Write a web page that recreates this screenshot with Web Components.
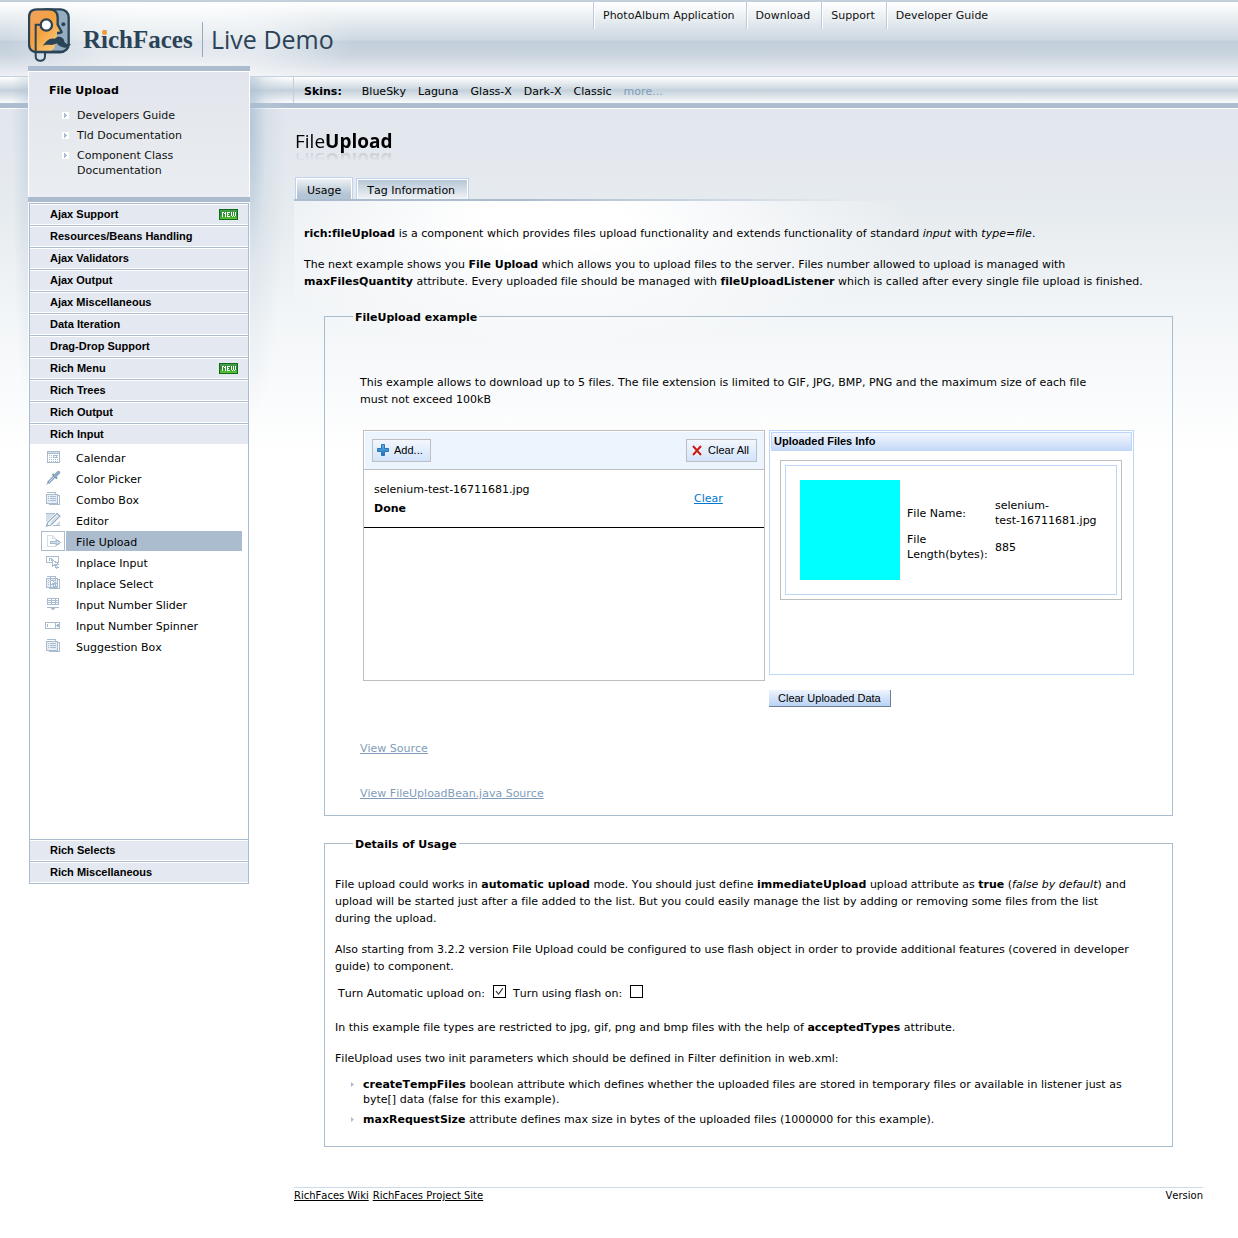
<!DOCTYPE html>
<html lang="en">
<head>
<meta charset="utf-8">
<title>RichFaces Live Demo - File Upload</title>
<style>
  html { background: #fff; }
  body { margin: 0; font: 11px/17px "DejaVu Sans", sans-serif; font-kerning: none; font-variant-ligatures: none; color: #000; }
</style>
</head>
<body>
<rf-app></rf-app>

<script>
const define = (name, html, setup) => {
  const template = document.createElement('template');
  template.innerHTML = html;
  customElements.define(name, class extends HTMLElement {
    connectedCallback() {
      if (this.shadowRoot) return;
      const root = this.attachShadow({ mode: 'open' });
      root.append(template.content.cloneNode(true));
      if (setup) setup(this, root);
    }
  });
};

/* Sidebar icons, drawn on a 16 by 16 grid */
const A = '#a9bccf', B = '#d3dee9';
const list = `<path fill="#e6edf4" d="M2 4h11v9H2z"/><path fill="none" stroke="${A}" d="M1.5 3.5h11v9h-11zM1.5 1.5h9v2M12.5 4.5h2v9h-11M5 5.500h6M5 7.500h6M5 9.500h6M3 5.500h1M3 7.500h1M3 9.500h1"/>`;
const cursor = `<path fill="#fff" stroke="${A}" d="M7.500 5.500v7l2-2 2 4 1.500-1-2-3h2.500z"/>`;
const ICONS = {
  calendar: `<path fill="none" stroke="${A}" d="M2.500 2.500h12v11h-12z"/><path stroke="${B}" d="M3 3.500h11"/><path stroke="${A}" d="M3 4.500h11"/><path stroke="${A}" stroke-dasharray="1 1" d="M4 6.500h10M4 8.500h10M4 10.500h10M4 12.500h10"/><path fill="#fff" stroke="${A}" d="M8.500 6.500h3v2h-3z"/>`,
  picker: `<g shape-rendering="auto"><path stroke="#7f9fbc" stroke-width="3" d="M3 13l7-7"/><path stroke="#dbe6f0" d="M4 12l6-6"/><path stroke="#6f93b5" stroke-width="2" d="M7.500 4l4.500 4.500"/><path stroke="#8faac3" stroke-width="3.500" stroke-linecap="round" d="M10.500 5.500l3-3"/><path stroke="#7f9fbc" d="M1.500 14.500l2-2"/></g>`,
  combo: list,
  editor: `<path fill="${B}" d="M1 2h9L1 10zM9 14l6-6v6z"/><path stroke="${A}" d="M1 1.500h9M8 13.500h7"/><g shape-rendering="auto"><path fill="#fff" stroke="#8faac3" stroke-width="1.200" d="M1.500 14l1.500-4 9-8.500L15 4 6 13z"/><path stroke="${A}" d="M5 11.500l8-8"/></g>`,
  upload: `<path fill="#fff" stroke="${B}" d="M2.500 2.500h5l3 3v8h-8z"/><path fill="none" stroke="${B}" d="M7.500 2.500v3h3"/><path fill="${B}" stroke="${A}" d="M5.500 8.500h6v-2l4 3-4 3v-2h-6z"/>`,
  inplace: `<path fill="#fff" stroke="${A}" d="M1.500 2.500h12v6h-12z"/><path fill="none" stroke="${A}" d="M4 6.500v-2h2.500v2"/>${cursor}`,
  select: `${list}<path stroke="${A}" d="M10.500 2v3M5.500 2v11"/><path fill="#fff" stroke="${A}" d="M5.500 4.500v6l2-2 2 4 1.500-1-2-3h2.500z"/>`,
  slider: `<path fill="#fff" stroke="${A}" d="M2.500 2.500h11v6h-11z"/><path stroke="${A}" d="M2 4.500h12M2 6.500h12M6.500 3v6M10.500 3v6M2 11.500h12"/><path fill="${A}" d="M5 11h6v1h-1v1H9v1H7v-1H6v-1H5z"/>`,
  spinner: `<path fill="#fff" stroke="${A}" d="M.500 5.500h14v6H.500zM10.500 5v7"/><path stroke="${A}" d="M2.500 7v3M11 8.500h4"/><path fill="${A}" d="M12 7h2v1h-2zM12 9h2v1h-2z"/>`,
  suggest: list
};

define('rf-icon', `
  <style>:host{display:block;width:16px;height:16px}svg{display:block}</style>
  <svg width="16" height="16" viewBox="0 0 16 16" fill="none" shape-rendering="crispEdges" aria-hidden="true"></svg>`,
  (el, root) => { root.querySelector('svg').innerHTML = ICONS[el.getAttribute('name')] || ''; });

define('rf-new-badge', `
  <style>:host{display:block;width:19px;height:11px}svg{display:block}</style>
  <svg width="19" height="11" viewBox="0 0 19 11" shape-rendering="crispEdges" role="img" aria-label="New">
    <defs><linearGradient id="g" x2="0" y2="1"><stop stop-color="#4aa04f"/><stop offset=".45" stop-color="#1f8a25"/><stop offset="1" stop-color="#5cc832"/></linearGradient></defs>
    <path fill="#0f6a1c" d="M0 0h19v11H0z"/><path fill="url(#g)" d="M1 1h17v9H1z"/>
    <path fill="#fff" d="M3 3h1v5H3zM4 3h1v1H4zM5 4h1v1H5zM6 3h1v5H6zM8 3h1v5H8zM9 3h2v1H9zM9 5h1v1H9zM9 7h2v1H9zM12 3h1v4h-1zM14 3h1v4h-1zM16 3h1v4h-1zM13 7h1v1h-1zM15 7h1v1h-1z"/>
  </svg>`);

define('rf-logo', `
  <style>
    :host{display:flex;color:#2b4356}
    .mark{display:block;flex:none;margin:8px 11px 0 0}
    .brand{position:relative;font:bold 25px/30px "Liberation Serif",serif;margin-top:25px;width:111px;white-space:nowrap}
    .dot{position:absolute;left:19px;top:5px;width:5px;height:5px;border-radius:50%;background:#f6a03c}
    .demo{border-left:1px solid #94a9bb;margin:22px 0 0 8px;padding:0 0 0 8px;height:35px;font:25px/34px "Open Sans",sans-serif;white-space:nowrap}
  </style>
  <svg class="mark" width="44" height="54" viewBox="0 0 132 162" aria-hidden="true">
    <defs>
      <linearGradient id="o" x2="1" y2="1"><stop stop-color="#eda163"/><stop offset=".45" stop-color="#f5a23e"/><stop offset="1" stop-color="#fbd68e"/></linearGradient>
    </defs>
    <rect x="28" y="4" width="94" height="128" rx="24" fill="#94aebf" stroke="#2b4356" stroke-width="7"/>
    <path d="M26 4h38c18 0 25 12 25 24v22l12 22c-5 4-9 3-14 3-1 30-6 57-30 57H26C12 132 3 124 3 108V28C3 12 12 4 26 4z" fill="url(#o)"/>
    <path d="M26 132C12 132 3 124 3 108V28C3 12 12 4 26 4h38c18 0 25 12 25 24v22l12 22c-5 4-9 3-14 3M26 132h72" fill="none" stroke="#2b4356" stroke-width="7" stroke-linejoin="round"/>
    <path d="M43 114c9-9 16-26 38-22 8-11 27-6 28 9 6 8 13 9 20 7-7 15-29 15-43-2-14 10-27 0-43 8z" fill="#2b4356"/>
    <path d="M38 50H23v95c0 18 28 18 28 0v-12" fill="none" stroke="#2b4356" stroke-width="6"/>
    <circle cx="55" cy="51" r="17" fill="#fff" stroke="#2b4356" stroke-width="7"/>
    <circle cx="106" cy="49" r="6" fill="#2b4356"/>
  </svg>
  <span class="brand">RichFaces<span class="dot"></span></span>
  <span class="demo">Live Demo</span>`);

define('rf-top-nav', `
  <style>
    :host{display:flex;padding-top:2px}
    a{color:#111;text-decoration:none;padding:5px 11px 5px 9px;border-left:1px solid #bccbd9;box-shadow:inset 1px 0 #fff;height:17px}
  </style>
  <a href="#album">PhotoAlbum Application</a><a href="#download">Download</a><a href="#support">Support</a><a href="#guide">Developer Guide</a>`);

define('rf-skins', `
  <style>
    :host{display:flex;gap:12px;height:26px;line-height:29px;padding-left:10px;margin-left:-1px;border-left:1px solid #c3cfdb}
    b{margin-right:8px}
    a{color:#000;text-decoration:none}
    .more{color:#7f9dba}
  </style>
  <b>Skins:</b><a href="#bluesky">BlueSky</a><a href="#laguna">Laguna</a><a href="#glassx">Glass-X</a><a href="#darkx">Dark-X</a><a href="#classic">Classic</a><a class="more" href="#more">more...</a>`);

define('rf-info-panel', `
  <style>
    :host{display:block;border:solid #abbccf;border-width:5px 0;box-sizing:border-box;height:136px}
    section{box-sizing:border-box;height:100%;padding:10px 12px 0 20px;border:1px solid #fff;border-bottom:0;background:linear-gradient(#e2e5ed,#e6eaee 50%,#eaeef2)}
    h2{font:bold 11px/17px "DejaVu Sans",sans-serif;margin:0}
    ul{list-style:none;margin:9px 0 0 13px;padding:0;line-height:15px}
    li{display:flex;gap:8px;margin-bottom:5px}
    svg{flex:none;margin-top:4px}
    a{color:#111;text-decoration:none}
  </style>
  <section>
    <h2>File Upload</h2>
    <ul></ul>
  </section>`,
  (el, root) => {
    root.querySelector('ul').innerHTML = ['Developers Guide', 'Tld Documentation', 'Component Class Documentation'].map(t =>
      `<li><svg width="7" height="7" aria-hidden="true" shape-rendering="crispEdges"><path fill="#fff" d="M0 0h7v7H0z"/><path fill="#a9bccf" d="M2 1h1v1h1v1h1v1H4v1H3v1H2z"/></svg><a href="#doc">${t}</a></li>`).join('');
  });

define('rf-menu-group', `
  <style>
    :host{display:block;border-top:1px solid #abbccf;background:#fff}
    button{display:flex;align-items:center;justify-content:space-between;width:100%;height:21px;padding:0 10px 0 20px;border:solid #fff;border-width:1px 0;background:#e4e8f0;font:bold 11px/17px "Liberation Sans",sans-serif;color:#000;text-align:left}
    :host([open]) button{height:20px;border-bottom:0}
    .items{display:none}
    :host([open]) .items{display:flex;flex-direction:column;gap:1px;height:392px;padding:3px 6px 0 11px}
  </style>
  <button type="button"><span></span></button>
  <div class="items"><slot></slot></div>`,
  (el, root) => {
    const button = root.querySelector('button');
    button.firstChild.textContent = el.getAttribute('label');
    button.setAttribute('aria-expanded', el.hasAttribute('open'));
    if (el.hasAttribute('new')) button.append(document.createElement('rf-new-badge'));
  });

define('rf-menu-item', `
  <style>
    :host{display:block}
    a{display:flex;gap:1px;color:#000;text-decoration:none;height:20px;line-height:18px}
    .icon{box-sizing:border-box;width:24px;padding:1px 3px;border:1px solid transparent}
    .label{flex:1;padding:3px 0 0 10px;box-sizing:border-box}
    :host([selected]) .icon{border-color:#abbccf;background:#fff}
    :host([selected]) .label{background:#abbccf}
  </style>
  <a href="#component"><span class="icon"><rf-icon></rf-icon></span><span class="label"><slot></slot></span></a>`,
  (el, root) => {
    const icon = document.createElement('rf-icon');
    icon.setAttribute('name', el.getAttribute('icon'));
    root.querySelector('.icon').replaceChildren(icon);
  });

define('rf-menu', `
  <style>
    :host{display:block;margin:1px 1px 0;border:solid #abbccf;border-width:0 1px 1px;box-shadow:0 0 0 1px rgba(255,255,255,.7)}
  </style>
  <nav>
    <rf-menu-group label="Ajax Support" new></rf-menu-group>
    <rf-menu-group label="Resources/Beans Handling"></rf-menu-group>
    <rf-menu-group label="Ajax Validators"></rf-menu-group>
    <rf-menu-group label="Ajax Output"></rf-menu-group>
    <rf-menu-group label="Ajax Miscellaneous"></rf-menu-group>
    <rf-menu-group label="Data Iteration"></rf-menu-group>
    <rf-menu-group label="Drag-Drop Support"></rf-menu-group>
    <rf-menu-group label="Rich Menu" new></rf-menu-group>
    <rf-menu-group label="Rich Trees"></rf-menu-group>
    <rf-menu-group label="Rich Output"></rf-menu-group>
    <rf-menu-group label="Rich Input" open>
      <rf-menu-item icon="calendar">Calendar</rf-menu-item>
      <rf-menu-item icon="picker">Color Picker</rf-menu-item>
      <rf-menu-item icon="combo">Combo Box</rf-menu-item>
      <rf-menu-item icon="editor">Editor</rf-menu-item>
      <rf-menu-item icon="upload" selected>File Upload</rf-menu-item>
      <rf-menu-item icon="inplace">Inplace Input</rf-menu-item>
      <rf-menu-item icon="select">Inplace Select</rf-menu-item>
      <rf-menu-item icon="slider">Input Number Slider</rf-menu-item>
      <rf-menu-item icon="spinner">Input Number Spinner</rf-menu-item>
      <rf-menu-item icon="suggest">Suggestion Box</rf-menu-item>
    </rf-menu-group>
    <rf-menu-group label="Rich Selects"></rf-menu-group>
    <rf-menu-group label="Rich Miscellaneous"></rf-menu-group>
  </nav>`);

define('rf-title', `
  <style>
    :host{display:block}
    h1{margin:0;width:fit-content;font:19px/20px "Open Sans",sans-serif;-webkit-box-reflect:below -1px linear-gradient(transparent 45%,rgba(0,0,0,.16))}
  </style>
  <h1>File<b>Upload</b></h1>`);

define('rf-tabs', `
  <style>
    :host{display:flex;align-items:flex-end;gap:3px;height:22px;padding-left:1px;border-bottom:2px solid;border-image:linear-gradient(90deg,#abbccf 25%,rgba(171,188,207,0) 62%) 1}
    button{border:1px solid #bfd3f0;border-bottom:0;box-shadow:inset 1px 1px #fff,inset -1px 0 #fff;padding:2px 13px 0 10px;height:21px;font:inherit;color:#000;background:linear-gradient(#b3c4d4,#f0f3f6)}
    [aria-selected=true]{height:22px;padding:3px 11px 0;background:linear-gradient(#f0f3f6,#b3c4d4 80%)}
  </style>
  <button type="button" role="tab" aria-selected="true">Usage</button><button type="button" role="tab" aria-selected="false">Tag Information</button>`);

define('rf-fieldset', `
  <style>
    :host{display:block;margin:0 30px}
    fieldset{margin:0;min-width:0;border:1px solid #a9bdd0;padding:0}
    legend{font-weight:bold;margin-left:28px;padding:2px 2px 0;line-height:15px}
    div{padding:var(--pad,0)}
  </style>
  <fieldset><legend></legend><div><slot></slot></div></fieldset>`,
  (el, root) => { root.querySelector('legend').textContent = el.getAttribute('legend'); });

define('rf-file-upload', `
  <style>
    :host{display:block;box-sizing:border-box;width:402px;height:251px;border:1px solid #bebebe;background:#fff}
    .bar{display:flex;justify-content:space-between;align-items:flex-start;margin:1px 0 0 1px;height:37px;padding:7px 7px 0;box-sizing:border-box;background:#ecf4fe}
    .wrap{border-bottom:1px solid #bebebe}
    button{display:flex;align-items:center;gap:4px;height:23px;padding:0 7px 0 4px;border:1px solid #bebebe;background:linear-gradient(#f3f7fd,#d2e3fa);font:11px/17px "Liberation Sans",sans-serif;color:#000}
    .row{display:flex;align-items:center;height:57px;padding:0 0 0 10px;border-bottom:1px solid #000}
    .name{width:320px;line-height:19px}
    .name b{display:block}
    a{color:#0078d0;line-height:19px}
    svg{display:block}
  </style>
  <div class="wrap"><div class="bar">
    <button type="button"><svg width="13" height="13" viewBox="0 0 13 13" aria-hidden="true"><defs><linearGradient id="p" x2="0" y2="1"><stop stop-color="#62b4ec"/><stop offset="1" stop-color="#1f6fb8"/></linearGradient></defs><path fill="url(#p)" stroke="#2a75b5" d="M4.500.500h3v4h4v3h-4v4h-3v-4h-4v-3h4z"/></svg>Add...</button>
    <button type="button"><svg width="13" height="13" viewBox="0 0 13 13" aria-hidden="true"><path stroke="#fff" stroke-width="4" d="M2 2l8 9M10 2l-8 9"/><path stroke="#c81e1e" stroke-width="2.200" d="M2 2l8 9M10 2l-8 9"/></svg>Clear All</button>
  </div></div>
  <div class="row"><div class="name">selenium-test-16711681.jpg<b>Done</b></div><a href="#clear">Clear</a></div>`);

define('rf-files-info', `
  <style>
    :host{display:block;box-sizing:border-box;width:365px;height:245px;border:1px solid #bed6f8;background:#fff;padding:1px}
    h3{margin:0;height:17px;border:1px solid #bed6f8;background:linear-gradient(#f2f6fe,#c5d9f8);font:bold 11px/17px "Liberation Sans",sans-serif;padding-left:2px}
    .outer{margin:9px 10px 0 9px;border:1px solid #bebebe;padding:4px}
    .inner{border:1px solid #bed6f8;padding:14px;display:flex;align-items:center;gap:5px}
    .thumb{flex:none;width:100px;height:100px;background:#0ff}
    table{border-spacing:2px;line-height:15px;width:204px}
    th{font-weight:normal;text-align:left;width:86px}
    th,td{padding:1px 0}
  </style>
  <h3>Uploaded Files Info</h3>
  <div class="outer"><div class="inner">
    <div class="thumb" role="img" aria-label="Uploaded picture"></div>
    <table>
      <tr><th scope="row">File Name:</th><td>selenium-<br>test-16711681.jpg</td></tr>
      <tr><th scope="row">File Length(bytes):</th><td>885</td></tr>
    </table>
  </div></div>`);

define('rf-example', `
  <style>
    :host{display:block}
    p{margin:0 0 22px}
    .panels{display:flex;align-items:flex-start;gap:4px;margin-left:3px}
    .side{display:flex;flex-direction:column;align-items:flex-start;gap:15px}
    button{height:17px;padding:0 9px;border:solid;border-width:0 1px 1px 0;border-color:#6b7f99;background:linear-gradient(#eef4fd,#b9d2f4);font:11px/16px "Liberation Sans",sans-serif;color:#000}
    .links{display:flex;flex-direction:column;align-items:flex-start;gap:28px;margin-top:33px}
    a{color:#7f9dba}
  </style>
  <p>This example allows to download up to 5 files. The file extension is limited to GIF, JPG, BMP, PNG and the maximum size of each file<br>must not exceed 100kB</p>
  <div class="panels">
    <rf-file-upload></rf-file-upload>
    <div class="side"><rf-files-info></rf-files-info><button type="button">Clear Uploaded Data</button></div>
  </div>
  <div class="links"><a href="#source">View Source</a><a href="#bean">View FileUploadBean.java Source</a></div>`);

define('rf-usage', `
  <style>
    :host{display:block}
    p{margin:0 0 14px}
    .options{display:flex;align-items:flex-start;gap:7px;margin:-4px 3px 17px}
    label{display:flex;gap:8px}
    input{appearance:none;display:grid;place-items:center;width:13px;height:13px;margin:0;border:1px solid #000;background:#fff}
    input:checked::before{content:"";width:8px;height:8px;background:#333;clip-path:polygon(0 50%,12% 40%,38% 72%,90% 0,100% 8%,40% 95%)}
    ul{list-style:none;margin:-4px 0 0;padding:0 0 0 15px;line-height:15px}
    li{display:flex;gap:9px;margin-bottom:5px}
    li:last-child{margin:0}
    svg{flex:none;margin-top:5px}
  </style>
  <p>File upload could works in <b>automatic upload</b> mode. You should just define <b>immediateUpload</b> upload attribute as <b>true</b> (<i>false by default</i>) and<br>upload will be started just after a file added to the list. But you could easily manage the list by adding or removing some files from the list<br>during the upload.</p>
  <p>Also starting from 3.2.2 version File Upload could be configured to use flash object in order to provide additional features (covered in developer<br>guide) to component.</p>
  <div class="options">
    <label>Turn Automatic upload on: <input type="checkbox" checked></label>
    <label>Turn using flash on: <input type="checkbox"></label>
  </div>
  <p>In this example file types are restricted to jpg, gif, png and bmp files with the help of <b>acceptedTypes</b> attribute.</p>
  <p>FileUpload uses two init parameters which should be defined in Filter definition in web.xml:</p>
  <ul>
    <li><svg width="4" height="5" aria-hidden="true"><path fill="#a9bccf" d="M1 0l3 2.500-3 2.500z"/></svg><span><b>createTempFiles</b> boolean attribute which defines whether the uploaded files are stored in temporary files or available in listener just as<br>byte[] data (false for this example).</span></li>
    <li><svg width="4" height="5" aria-hidden="true"><path fill="#a9bccf" d="M1 0l3 2.500-3 2.500z"/></svg><span><b>maxRequestSize</b> attribute defines max size in bytes of the uploaded files (1000000 for this example).</span></li>
  </ul>`);

define('rf-footer', `
  <style>
    :host{display:flex;justify-content:space-between;border-top:1px solid #cddcea;font-size:10px;line-height:16px}
    a{color:#000}
    .links{display:flex;gap:4px}
  </style>
  <span class="links"><a href="#wiki">RichFaces Wiki</a><a href="#site">RichFaces Project Site</a></span><span>Version</span>`);

define('rf-app', `
  <style>
    :host{display:block;min-height:100vh;
      background:
        radial-gradient(ellipse 175px 60px at 180px 38px,rgba(255,255,255,.5) 50%,rgba(255,255,255,0)) 0 2px/100% 74px no-repeat,
        linear-gradient(#c3cfdc,#c3cfdc) 0 0/100% 2px no-repeat,
        linear-gradient(#fff,#ccd8e0 38px,#c2ceda 39px,#c9d4df 52px,#eff0f4) 0 2px/100% 74px no-repeat,
        radial-gradient(ellipse 36px 300px at 0 50px,rgba(165,188,208,.75),rgba(190,206,220,.3) 45%,rgba(255,255,255,0)) 250px 77px/44px 360px no-repeat,
        radial-gradient(ellipse 16px 280px at 28px 50px,rgba(165,188,208,.35),rgba(255,255,255,0)) 0 77px/28px 360px no-repeat,
        linear-gradient(#c3d2e0,#c3d2e0) 0 76px/100% 1px no-repeat,
        linear-gradient(#fff,#cdd8e0 12px,#c2cfda 13px,#fbfbfc) 0 77px/100% 26px no-repeat,
        linear-gradient(#adbdd0,#adbdd0) 0 103px/100% 5px no-repeat,
        linear-gradient(#fff,#fff) 0 108px/100% 1px no-repeat,
        linear-gradient(#e2e6ee,#e6ebef 100px,#f3f6f8 210px,#fff 350px) 0 109px/100% 350px no-repeat,
        #fff}
    header{display:flex;height:66px;padding-left:28px}
    rf-logo{flex:0 0 565px}
    .body{display:flex;align-items:flex-start;padding:0 35px 20px 28px}
    aside{flex:0 0 222px;margin-right:44px}
    main{flex:1;min-width:0;padding-top:11px}
    rf-title{margin:28px 0 26px 1px}
    .content{padding-top:24px;background:radial-gradient(ellipse 360px 130px at 260px 20px,#fff 20%,rgba(255,255,255,0)) no-repeat}
    p{margin:0 0 14px;padding:0 10px}
    .example{--pad:49px 35px 13px;margin-top:18px}
    .details{--pad:24px 10px 19px;margin-top:19px}
    rf-footer{margin-top:40px}
  </style>
  <header><rf-logo></rf-logo><rf-top-nav></rf-top-nav></header>
  <div class="body">
    <aside><rf-info-panel></rf-info-panel><rf-menu></rf-menu></aside>
    <main>
      <rf-skins></rf-skins>
      <rf-title></rf-title>
      <rf-tabs></rf-tabs>
      <div class="content">
        <p><b>rich:fileUpload</b> is a component which provides files upload functionality and extends functionality of standard <i>input</i> with <i>type=file</i>.</p>
        <p>The next example shows you <b>File Upload</b> which allows you to upload files to the server. Files number allowed to upload is managed with<br><b>maxFilesQuantity</b> attribute. Every uploaded file should be managed with <b>fileUploadListener</b> which is called after every single file upload is finished.</p>
        <rf-fieldset class="example" legend="FileUpload example"><rf-example></rf-example></rf-fieldset>
        <rf-fieldset class="details" legend="Details of Usage"><rf-usage></rf-usage></rf-fieldset>
      </div>
      <rf-footer></rf-footer>
    </main>
  </div>`);
</script>
</body>
</html>
